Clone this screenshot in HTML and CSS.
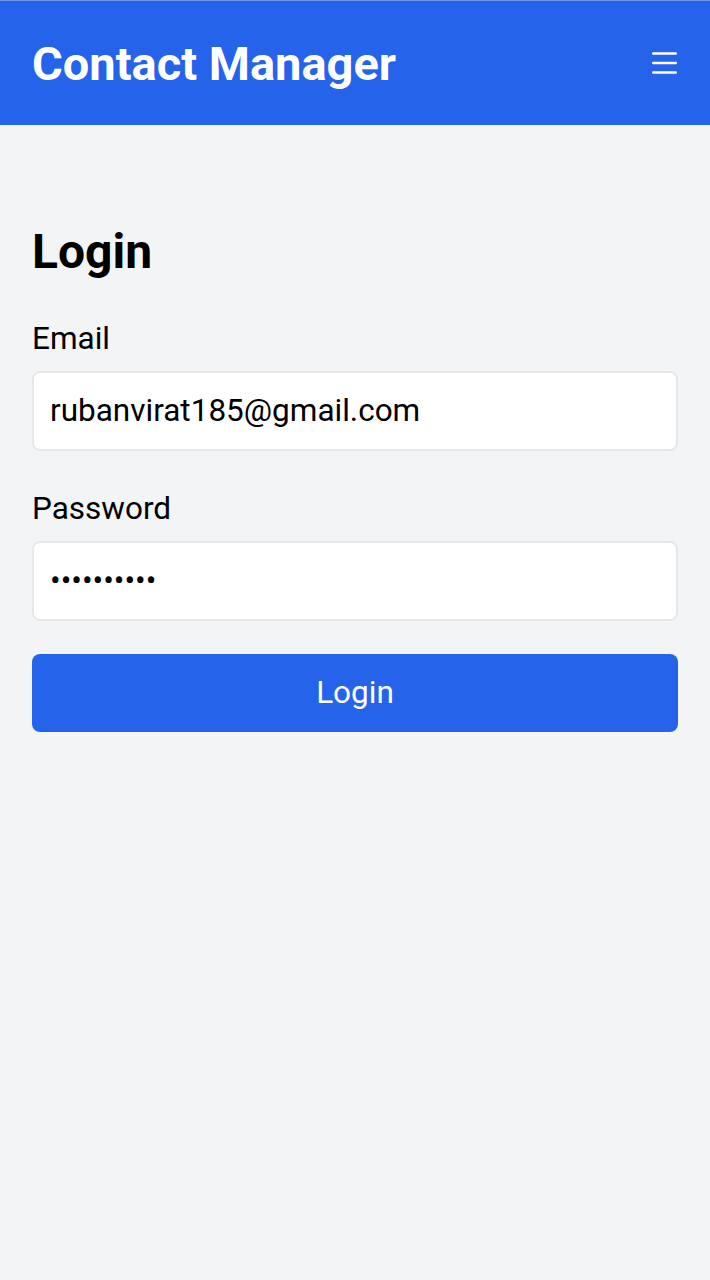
FILE: index.html
```html
<!DOCTYPE html>
<html>
<head>
<meta charset="utf-8">
<link rel="stylesheet" href="styles.css">
</head>
<body>
<header class="topbar">
  <h1 class="brand">Contact Manager</h1>
  <button class="menu" aria-label="Menu">
    <svg width="25" height="22" viewBox="0 0 25 22"><path d="M1.2 1.5h22.6M1.2 11h22.6M1.2 20.5h22.6" stroke="#fff" stroke-width="2.4" stroke-linecap="round" fill="none"/></svg>
  </button>
</header>
<main class="content">
  <h2 class="title">Login</h2>
  <form class="form">
    <label class="label" for="email">Email</label>
    <input class="field" id="email" type="email" value="rubanvirat185@gmail.com">
    <label class="label label-gap" for="pw">Password</label>
    <input class="field" id="pw" type="password" value="1234567890">
    <button class="submit" type="button">Login</button>
  </form>
</main>
</body>
</html>
```
FILE: styles.css
```css
* { box-sizing: border-box; }
html, body { margin: 0; padding: 0; }
body {
  background: #f3f4f6;
  font-family: Roboto, "Noto Sans", sans-serif;
  color: #000;
  min-height: 1280px;
}
.topbar {
  height: 125px;
  background: #2563eb;
  border-top: 1px solid #6f94ea;
  display: flex;
  align-items: center;
  justify-content: space-between;
  padding: 0 32px 0 32px;
}
.brand {
  margin: 0;
  color: #fff;
  font-size: 47px;
  font-weight: 700;
  line-height: 1;
}
.menu {
  background: none;
  border: 0;
  padding: 0;
  margin-right: 1px;
  display: flex;
}
.content {
  padding: 98px 32px 0;
}
.title {
  margin: 0;
  font-size: 48px;
  font-weight: 700;
  line-height: 1.2;
}
.form {
  display: flex;
  flex-direction: column;
  margin-top: 35px;
}
.label {
  font-size: 31.5px;
  line-height: 45px;
  margin-bottom: 10px;
}
.label-gap { margin-top: 35px; }
.field {
  height: 80px;
  border: 2px solid #e5e7eb;
  border-radius: 8px;
  background: #fff;
  padding: 0 16px;
  font-family: Roboto, sans-serif;
  font-size: 31.5px;
  color: #000;
  outline: none;
}
.submit {
  margin-top: 33px;
  height: 78px;
  background: #2563eb;
  color: #fff;
  border: 0;
  border-radius: 8px;
  font-family: Roboto, sans-serif;
  font-size: 31.5px;
}
```
